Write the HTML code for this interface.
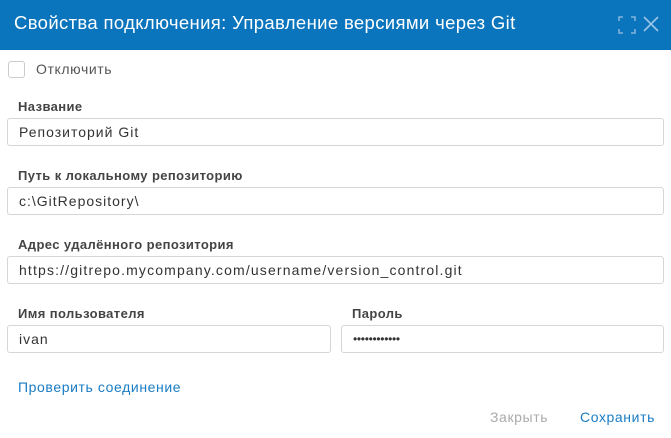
<!DOCTYPE html>
<html><head><meta charset="utf-8"><style>
body{margin:0;width:671px;height:438px;background:#fff;font-family:"Liberation Sans",sans-serif;position:relative;overflow:hidden}
.hd{position:absolute;left:0;top:0;width:671px;height:50px;background:#0a74bd;color:#fff}
.hd .t{position:absolute;left:14px;top:12px;font-size:18.5px;letter-spacing:0.35px}
.a{position:absolute}
.lbl{position:absolute;font-size:13px;font-weight:bold;color:#444;left:18px;letter-spacing:0.4px}
.in{position:absolute;height:26px;border:1px solid #d6d6d6;border-radius:3px;font-size:14px;color:#333;line-height:26px;padding-left:11px;box-sizing:content-box;letter-spacing:1px}
.bt{position:absolute;font-size:14px;letter-spacing:0.6px}
</style></head><body>
<div class="hd"><div class="t">Свойства подключения: Управление версиями через Git</div>
<svg class="a" style="left:617px;top:15px" width="20" height="20" viewBox="0 0 20 20" fill="none" stroke="#7fb3dc" stroke-width="1.6"><path d="M2 6V2h4M14 2h4v4M18 14v4h-4M6 18H2v-4"/></svg>
<svg class="a" style="left:642px;top:15px" width="18" height="18" viewBox="0 0 18 18" stroke="#9cc4e4" stroke-width="1.6"><path d="M2 2l14 14M16 2L2 16"/></svg>
</div>
<div class="a" style="left:8px;top:61px;width:15px;height:15px;border:1px solid #ccc;border-radius:3px"></div>
<div class="bt" style="left:36px;top:61px;color:#555">Отключить</div>
<div class="lbl" style="top:99px">Название</div>
<div class="in" style="left:7px;top:118px;width:644px">Репозиторий Git</div>
<div class="lbl" style="top:168px">Путь к локальному репозиторию</div>
<div class="in" style="left:7px;top:187px;width:644px">c:\GitRepository\</div>
<div class="lbl" style="top:237px">Адрес удалённого репозитория</div>
<div class="in" style="left:7px;top:256px;width:644px;letter-spacing:1.15px">https://gitrepo.mycompany.com/username/version_control.git</div>
<div class="lbl" style="top:306px">Имя пользователя</div>
<div class="lbl" style="top:306px;left:352px">Пароль</div>
<div class="in" style="left:7px;top:325px;width:311px">ivan</div>
<div class="in" style="left:341px;top:325px;width:310px;font-size:12px;letter-spacing:-0.3px">••••••••••••</div>
<div class="bt" style="left:18px;top:379px;color:#1a7cc4">Проверить соединение</div>
<div class="bt" style="left:490px;top:409px;color:#aaa">Закрыть</div>
<div class="bt" style="left:580px;top:409px;color:#1a7cc4">Сохранить</div>
</body></html>
